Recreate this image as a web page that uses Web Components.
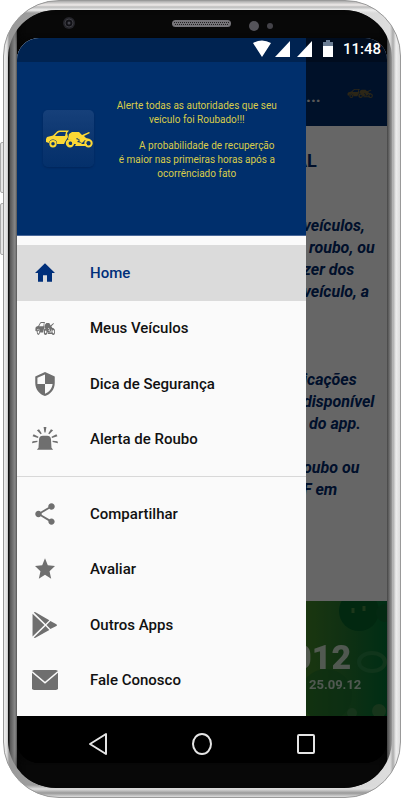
<!DOCTYPE html>
<html lang="pt-BR">
<head>
<meta charset="utf-8">
<meta name="viewport" content="width=device-width,initial-scale=1">
<title>Alerta de Roubo</title>
<style>
body{margin:0;background:#fff;font-family:Roboto,"Liberation Sans",sans-serif}
</style>
</head>
<body>
<phone-frame>
  <status-bar slot="status" time="11:48"></status-bar>
  <app-page></app-page>
  <side-drawer slot="drawer">
    <drawer-header slot="header"></drawer-header>
    <nav-item icon="home" active>Home</nav-item>
    <nav-item icon="vehicles">Meus Veículos</nav-item>
    <nav-item icon="shield">Dica de Segurança</nav-item>
    <nav-item icon="siren">Alerta de Roubo</nav-item>
    <nav-divider></nav-divider>
    <nav-item icon="share">Compartilhar</nav-item>
    <nav-item icon="star">Avaliar</nav-item>
    <nav-item icon="play">Outros Apps</nav-item>
    <nav-item icon="mail">Fale Conosco</nav-item>
  </side-drawer>
  <system-nav slot="system"></system-nav>
</phone-frame>

<script>
const define = (name, html, setup) => {
  const tpl = document.createElement('template');
  tpl.innerHTML = html;
  customElements.define(name, class extends HTMLElement {
    connectedCallback() {
      if (this.shadowRoot) return;
      this.attachShadow({mode: 'open'}).append(tpl.content.cloneNode(true));
      if (setup) setup(this, this.shadowRoot);
    }
  });
};

const vehiclePaths = `<path d="M1 9 2 7 8 5.500 12 1.500Q13 .5 15 .5H24L22 3 23 7 20 12 19 14H12A4 4 0 0 0 4 13L1 12ZM10 6H20L21 2H15Q13 2 10 6Z"/>
<path d="M8 10A3.700 3.700 0 1 0 8 17.400 3.700 3.700 0 0 0 8 10ZM8 12A1.700 1.700 0 1 1 8 15.500 1.700 1.700 0 0 1 8 12Z"/>
<path d="M24 4 27 2 34 2 37 5 44 2 45 3 39 6 41 8 45 9 44 10 40 10 36 14H29L28 11 25 9 23 9ZM32 8 35 10 34 11 37 13 32 12 34 10 31 9Z"/>
<path d="M25 9A4.200 4.200 0 1 0 25 17.400 4.200 4.200 0 0 0 25 9ZM25 11.500A1.800 1.800 0 1 1 25 15 1.800 1.800 0 0 1 25 11.500ZM43.500 9A4.200 4.200 0 1 0 43.500 17.400 4.200 4.200 0 0 0 43.500 9ZM43.500 11A2.200 2.200 0 1 1 43.500 15.400 2.200 2.200 0 0 1 43.500 11Z"/>
<path d="M31 14H42V16H30Z"/>`;
const vehicles = `<svg viewBox="0 0 48 18" fill="currentColor" fill-rule="evenodd" aria-hidden="true">${vehiclePaths}</svg>`;

const icons = {
  home: '<path d="M10 20V14H14V20H19V12H22L12 3 2 12H5V20Z"/>',
  vehicles: `<g fill-rule="evenodd" transform="translate(2 6) scale(.42 .72)">${vehiclePaths}</g>`,
  shield: '<path d="M12 1 3 5V11C3 16.550 6.840 21.740 12 23 17.160 21.740 21 16.550 21 11V5ZM12 12H19C18.470 16.110 15.720 19.780 12 20.930V12H5V6.300L12 3.190Z"/>',
  siren: '<path d="M6.500 12Q7 9 10 9H14Q17 9 17.500 12L18 20 19.500 22H4.500L6 20ZM10.700 1H13.300L12.500 6H11.500ZM4.500 4 6.500 3 9 7 8 7.500ZM19.500 4 17.500 3 15 7 16 7.500ZM.5 9.500 1.500 7.500 6 10 5.500 11ZM23.500 9.500 22.500 7.500 18 10 18.500 11ZM0 16 .5 14 5 13.500V14.700ZM24 16 23.500 14 19 13.500V14.700Z"/>',
  share: '<path d="M18 16.080C17.240 16.080 16.560 16.380 16.040 16.850L8.910 12.700C8.960 12.470 9 12.240 9 12S8.960 11.530 8.910 11.300L15.960 7.190C16.500 7.690 17.210 8 18 8 19.660 8 21 6.660 21 5S19.660 2 18 2 15 3.340 15 5C15 5.240 15.040 5.470 15.090 5.700L8.040 9.810C7.500 9.310 6.790 9 6 9 4.340 9 3 10.340 3 12S4.340 15 6 15C6.790 15 7.500 14.690 8.040 14.190L15.160 18.350C15.110 18.560 15.080 18.780 15.080 19 15.080 20.610 16.390 21.920 18 21.920S20.920 20.610 20.920 19 19.610 16.080 18 16.080Z"/>',
  star: '<path d="M12 17.270 18.180 21 16.540 13.970 22 9.240 14.810 8.630 12 2 9.190 8.630 2 9.240 7.460 13.970 5.820 21Z"/>',
  play: '<path d="M.5 1.500 11.500 12 .5 22.500ZM1.700.4Q2.500-.3 4 .6L16 7.500 12.500 11ZM1.700 23.600Q2.500 24.300 4 23.400L16 16.500 12.500 13ZM17 8.200 22.500 11.200Q23.800 12 22.500 12.900L17 15.800 13.400 12Z"/>',
  mail: '<path d="M0 3Q0 1 2 1H22Q24 1 24 3V21Q24 23 22 23H2Q0 23 0 21Z"/><path d="M0 3 12 15 24 3" fill="none" stroke="#fafafa" stroke-width="1.400"/>'
};

define('phone-frame', `<style>
:host{display:block;height:100vh;min-height:640px;box-sizing:border-box;padding:0 0 2px 3px;position:relative;overflow:hidden}
.key{position:absolute;left:0;width:5px;box-sizing:border-box;border:1px solid #aaa;background:#e6e6e6;border-radius:2px}
.k1{top:142px;height:51px}.k2{top:203px;height:52px}
.shell{position:relative;height:100%;box-sizing:border-box;border-radius:56px;padding:9px 8px 9px 4px;border:1px solid #999;
 background:linear-gradient(#aaa,#efebea 4px,#bbb 6px,#eee 9px,transparent 12px,transparent calc(100% - 12px),#ddd calc(100% - 8px),#999 calc(100% - 4px),#ddd),linear-gradient(90deg,#eee,#ddd 3px,#999 5px,#ddd calc(100% - 10px),#aaa calc(100% - 7px),#eee calc(100% - 4px),#ddd);display:flex;overflow:hidden}
.bezel{flex:1;min-width:0;box-sizing:border-box;display:flex;flex-direction:column;border-radius:48px;overflow:hidden;padding:0 5px 0 9px;position:relative;
 background:linear-gradient(90deg,#111 1px,#555 2px,#747474 5px,#888 7px,#555 9px,transparent 9px,transparent calc(100% - 5px),#444 calc(100% - 5px),#999),#050505}
.bezel::before,.bezel::after{content:"";position:absolute;left:12px;right:7px;height:30px;background:#080808;filter:blur(4px)}
.bezel::before{top:-1px}.bezel::after{bottom:-1px}
.top{height:28px;flex:none;display:flex;align-items:center;position:relative;z-index:1}
.top svg{width:100%;height:28px;display:block}
.screen{position:relative;flex:1;min-height:0;display:flex;flex-direction:column;border-radius:22px;overflow:hidden;background:#000;z-index:1}
.view{position:relative;flex:1;min-height:0;display:flex;flex-direction:column;overflow:hidden}
.scrim{position:absolute;inset:0;background:rgba(0,0,0,.6)}
.bottom{height:25px;flex:none}
slot[name=drawer]{display:block;position:absolute;top:0;bottom:0;left:0;width:78%}
slot[name=status]{display:block;position:absolute;top:0;left:0;right:0}
</style>
<div class="key k1"></div><div class="key k2"></div>
<div class="shell"><div class="bezel">
<div class="top"><svg viewBox="0 0 370 28" aria-hidden="true"><circle cx="52" cy="13" r="6" fill="#24242a"/><circle cx="52" cy="13" r="4" fill="#111116" stroke="#3c3c42"/><circle cx="52" cy="13" r="1.500" fill="#42424a"/><rect x="155" y="10" width="59" height="7" rx="3.500" fill="#77757a"/><path d="M157 12.500H212M158 14.500H211" stroke="#222" stroke-dasharray="1 1"/><circle cx="237" cy="16" r="5" fill="#55545a"/><circle cx="253" cy="16" r="3" fill="#444349"/></svg></div>
<div class="screen"><div class="view"><slot></slot><div class="scrim"></div><slot name="drawer"></slot><slot name="status"></slot></div><slot name="system"></slot></div>
<div class="bottom"></div>
</div></div>`);

define('status-bar', `<style>
:host{display:flex;align-items:center;justify-content:flex-end;height:24px;box-sizing:border-box;padding:0 6px 3px 0;background:rgba(0,0,0,.25);color:#fff;font-size:15px;font-weight:500;line-height:20px}
svg{width:84px;height:20px;margin-right:6px}
</style><svg viewBox="0 0 84 20" fill="#fff" aria-hidden="true"><path d="M0 4Q9-1 18 4L9 18ZM22 18 37 2V18ZM44 18 59 2V18Z"/><path d="M70 5V18H80V5Z"/><path d="M70 7V3H73V1H77V3H80V7Z" fill="#6b7d93"/></svg><time></time>`,
(el, root) => root.querySelector('time').textContent = el.getAttribute('time'));

define('app-page', `<style>
:host{display:flex;flex-direction:column;flex:1;min-height:0;background:#fff;color:#00296b}
header{height:50px;padding:38px 12px 0 289px;background:#002b66;display:flex;justify-content:space-between;flex:none}
header b{color:#ddd;font-size:17px;line-height:40px}
header span{color:#6f6038;width:28px;padding-top:12px}
header svg{display:block;width:26px;height:11px}
main{flex:1;min-height:0;overflow:hidden;padding:24px 0 0 286px;font-size:16px;line-height:22px;white-space:nowrap}
h1,p{margin:0}
h1{font-size:18px;line-height:22px;font-weight:700;text-indent:-8px;margin-bottom:43px}
p{font-weight:700;font-style:italic}
p+p{margin-top:66px}
p+p+p{margin-top:22px}
.in{padding-left:6px}
footer{position:relative;height:115px;flex:none;box-sizing:border-box;padding:36px 0 0 275px;overflow:hidden;color:#fff;background:linear-gradient(90deg,#4a8c25 75%,#2a7a30 88%,#007234);font-weight:700;white-space:nowrap}
footer svg{position:absolute;right:0;top:0;width:86px;height:115px}
strong,small{display:block;position:relative;opacity:.75}
strong{font-size:34px;line-height:40px}
small{font-size:13px;line-height:16px;padding-left:17px}
</style>
<header><b>...</b><span>${vehicles}</span></header>
<main><h1>AL</h1>
<p>veículos,<br><span class="in">roubo, ou</span><br>zer dos<br>veículo, a</p>
<p>icações<br>disponível<br><span class="in">do app.</span></p>
<p>oubo ou<br>F em</p></main>
<footer><svg viewBox="0 0 86 115" fill="none" aria-hidden="true"><circle cx="58" cy="10" r="20" fill="#05642a"/><path d="M52 7v5M63 5v5" stroke="#4a8a42" stroke-width="3"/><ellipse cx="71" cy="61" rx="13" ry="9" stroke="#2a8444" stroke-width="4"/><circle cx="84" cy="12" r="9" fill="#0b682d"/><circle cx="25" cy="94" r="26" fill="#17702c" opacity=".5"/><circle cx="51" cy="112" r="5" fill="#3a8444"/><circle cx="78" cy="110" r="7" fill="#3a8444"/></svg><strong>012</strong><small>25.09.12</small></footer>`);

define('side-drawer', `<style>
:host{display:flex;flex-direction:column;height:100%;background:#fafafa}
nav{flex:1;min-height:0;display:flex;flex-direction:column;padding:9px 0 8px;box-sizing:border-box}
</style><slot name="header"></slot><nav><slot></slot></nav>`);

define('drawer-header', `<style>
:host{display:flex;align-items:flex-start;box-sizing:border-box;height:198px;flex:none;background:#002f6c;color:#d8cc4a;padding:61px 26px 0 26px;border-bottom:1px solid #4a6899;gap:20px}
.logo{display:flex;align-items:center;justify-content:center;width:51px;height:57px;margin-top:11px;flex:none;border-radius:5px;background:linear-gradient(#16407a,#0c3670 50%,#04306b);box-shadow:0 1px 2px #00255a;color:#fcd835}
.logo svg{width:48px;height:18px}
.text{flex:1;font-size:10px;line-height:14px;text-align:center;white-space:nowrap}
p{margin:0 0 12px}
.pad{padding-left:20px}
</style><div class="logo">${vehicles}</div><div class="text"><p>Alerte todas as autoridades que seu<br>veículo foi Roubado!!!</p><p><span class="pad">A probabilidade de recuperção</span><br>é maior nas primeiras horas após a<br>ocorrênciado fato</p></div>`);

define('nav-item', `<style>
:host{display:flex;flex:1;color:#111}
:host([active]){background:#dbdbdb;color:#002f7a}
a{flex:1;display:flex;align-items:center;gap:32px;padding-left:15px;color:inherit;text-decoration:none;font-size:15px;font-weight:500;line-height:20px}
svg{width:26px;height:26px;fill:#6f6f6f;flex:none;overflow:visible}
:host([active]) svg{fill:#002f7a}
:host([icon=home]) svg,:host([icon=star]) svg{width:24px;margin:0 1px}
:host([icon=mail]) svg{height:22px}
:host([icon=vehicles]) svg{width:24px;margin:0 1px}
</style><a href="#"><svg viewBox="0 0 24 24" preserveAspectRatio="none" aria-hidden="true"></svg><slot></slot></a>`,
(el, root) => root.querySelector('svg').innerHTML = icons[el.getAttribute('icon')]);

define('nav-divider', `<style>:host{display:block;height:1px;flex:none;margin:9px 0;background:#d8d8d8}</style>`);

define('system-nav', `<style>
:host{display:flex;justify-content:space-around;align-items:center;height:47px;flex:none;background:#000;padding:8px 29px 0;box-sizing:border-box}
button{width:36px;height:36px;padding:6px;margin:0;border:0;background:none}
svg{display:block;width:24px;height:24px;fill:none;stroke:#e4e4e4;stroke-width:2;stroke-linejoin:round}
</style>
<button aria-label="Voltar"><svg viewBox="0 0 24 24"><path d="M20 2V22L4 12Z"/></svg></button>
<button aria-label="Início"><svg viewBox="0 0 24 24"><ellipse cx="12" cy="12" rx="9" ry="10"/></svg></button>
<button aria-label="Recentes"><svg viewBox="0 0 24 24"><rect x="4" y="3" width="16" height="18" rx="1"/></svg></button>`);
</script>
</body>
</html>
